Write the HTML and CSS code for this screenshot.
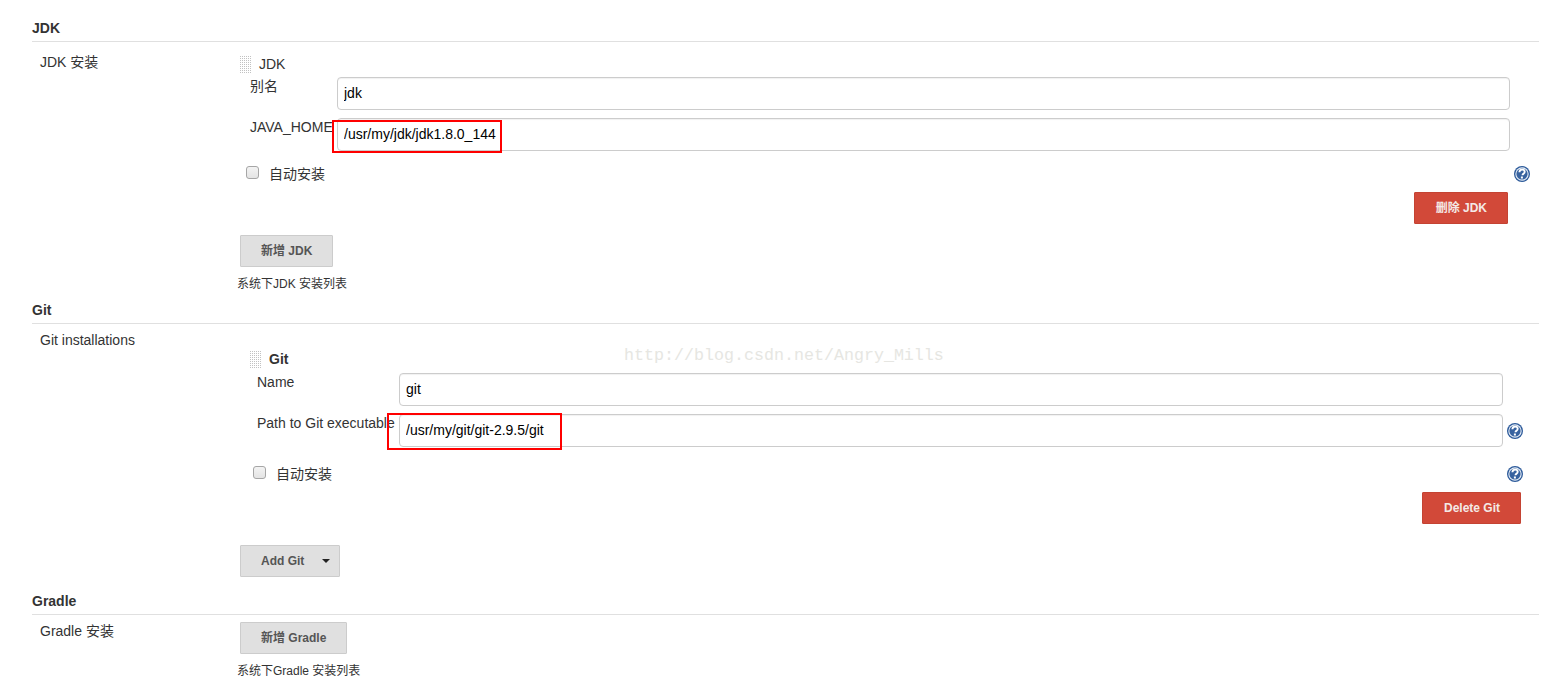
FILE: index.html
```html
<!DOCTYPE html>
<html lang="zh">
<head>
<meta charset="utf-8">
<title>Global Tool Configuration</title>
<link rel="stylesheet" href="styles.css">
</head>
<body>
<main class="page">
  <div class="watermark">http://blog.csdn.net/Angry_Mills</div>

  <section class="section section-jdk">
    <h2 class="section-title">JDK</h2>
    <div class="row row-jdk">
      <div class="row-label">JDK 安装</div>
      <div class="row-body">
        <div class="tool tool-jdk">
          <div class="tool-head"><span class="handle"></span><span class="tool-name">JDK</span></div>
          <div class="field">
            <label class="field-label">别名</label>
            <div class="input-wrap"><input class="text-input" type="text" value="jdk"></div>
          </div>
          <div class="field">
            <label class="field-label">JAVA_HOME</label>
            <div class="input-wrap"><input class="text-input" type="text" value="/usr/my/jdk/jdk1.8.0_144"><span class="mark mark-jdk"></span></div>
          </div>
          <div class="check-row">
            <input class="check" type="checkbox">
            <span class="check-text">自动安装</span>
            <svg class="help" viewBox="0 0 16 16"><use href="#help-icon"></use></svg>
          </div>
          <div class="tool-actions"><button class="btn btn-danger btn-cjk" type="button">删除 JDK</button></div>
        </div>
        <button class="btn btn-add btn-cjk" type="button">新增 JDK</button>
        <p class="hint">系统下JDK 安装列表</p>
      </div>
    </div>
  </section>

  <section class="section section-git">
    <h2 class="section-title">Git</h2>
    <div class="row row-git">
      <div class="row-label">Git installations</div>
      <div class="row-body">
        <div class="tool tool-git">
          <div class="tool-head"><span class="handle"></span><span class="tool-name tool-name-bold">Git</span></div>
          <div class="field">
            <label class="field-label">Name</label>
            <div class="input-wrap"><input class="text-input" type="text" value="git"></div>
            <span></span>
          </div>
          <div class="field">
            <label class="field-label">Path to Git executable</label>
            <div class="input-wrap"><input class="text-input" type="text" value="/usr/my/git/git-2.9.5/git"><span class="mark mark-git"></span></div>
            <svg class="help" viewBox="0 0 16 16"><use href="#help-icon"></use></svg>
          </div>
          <div class="check-row">
            <input class="check" type="checkbox">
            <span class="check-text">自动安装</span>
            <svg class="help" viewBox="0 0 16 16"><use href="#help-icon"></use></svg>
          </div>
          <div class="tool-actions"><button class="btn btn-danger" type="button">Delete Git</button></div>
        </div>
        <button class="btn btn-add btn-menu" type="button">Add Git<span class="caret"></span></button>
      </div>
    </div>
  </section>

  <section class="section section-gradle">
    <h2 class="section-title">Gradle</h2>
    <div class="row row-gradle">
      <div class="row-label">Gradle 安装</div>
      <div class="row-body">
        <button class="btn btn-add btn-cjk" type="button">新增 Gradle</button>
        <p class="hint">系统下Gradle 安装列表</p>
      </div>
    </div>
  </section>
</main>

<svg class="defs" aria-hidden="true">
  <symbol id="help-icon" viewBox="0 0 16 16">
    <circle cx="8" cy="8" r="8" fill="#2c5a9a"/>
    <circle cx="8" cy="8" r="6.7" fill="#e6edf6"/>
    <circle cx="8" cy="8" r="5.6" fill="#37629f"/>
    <path d="M5.4 6.2C5.5 4.5 6.6 3.6 8.1 3.6c1.6 0 2.6.9 2.6 2.2 0 1.1-.7 1.6-1.4 2.1-.6.4-.8.7-.8 1.4" fill="none" stroke="#fff" stroke-width="1.9"/>
    <rect x="6.9" y="10.5" width="2" height="2" fill="#fff"/>
  </symbol>
</svg>
</body>
</html>
```
FILE: styles.css
```css
* { box-sizing: border-box; }
html, body { margin: 0; padding: 0; background: #fff; }
body {
  font-family: "Liberation Sans", "Noto Sans CJK SC", sans-serif;
  font-size: 14px;
  color: #333;
  overflow: hidden;
}
.page {
  position: relative;
  width: 1548px;
  height: 690px;
  padding: 15px 9px 0 32px;
  overflow: hidden;
}
.defs { position: absolute; width: 0; height: 0; }
.watermark {
  position: absolute;
  left: 624px;
  top: 346px;
  font-family: "Liberation Mono", monospace;
  font-size: 16.67px;
  line-height: 20px;
  color: #e6e6e2;
  white-space: nowrap;
}
.section-git { margin-top: 5px; }
.section-gradle { margin-top: 11px; }
.section-title {
  margin: 0;
  height: 27px;
  line-height: 27px;
  font-size: 14px;
  font-weight: 700;
  color: #333;
  border-bottom: 1px solid #e0e0e0;
}
.row { display: grid; grid-template-columns: 208px 1fr; }
.row-label { padding-left: 8px; line-height: 20px; }
.row-jdk .row-label { padding-top: 10px; }
.row-git .row-label { padding-top: 6px; }
.row-gradle .row-label { padding-top: 6px; }
.row-body { display: flex; flex-direction: column; align-items: flex-start; }
.tool { width: 100%; }
.tool-jdk { padding-left: 0; margin-top: 14px; }
.tool-git { margin-top: 27px; }
.tool-head { display: flex; align-items: center; height: 17px; }
.tool-git .tool-head { padding-left: 10px; }
.handle {
  flex: none;
  width: 11px;
  height: 17px;
  margin-right: 8px;
  background-image:
    linear-gradient(#fff 1px, transparent 1px),
    linear-gradient(90deg, #fff 1px, transparent 1px);
  background-size: 2px 2px;
  background-position: 1px 1px;
  background-color: #c2c2c2;
}
.tool-name { line-height: 17px; }
.tool-name-bold { font-weight: 700; }
.field { display: grid; margin-bottom: 8px; }
.tool-jdk .field { grid-template-columns: 87px 1fr; padding: 0 29px 0 10px; }
.tool-git .field { grid-template-columns: 142px 1fr 20px; padding: 0 16px 0 17px; align-items: start; }
.tool-jdk .tool-head + .field { margin-top: 4px; }
.tool-git .tool-head + .field { margin-top: 5px; }
.field-label { display: block; line-height: 20px; margin-top: -1px; white-space: nowrap; }
.input-wrap { position: relative; }
.text-input {
  display: block;
  width: 100%;
  height: 33px;
  padding: 0 6px 2px;
  font-family: inherit;
  font-size: 14px;
  color: #000;
  background: #fff;
  border: 1px solid #ccc;
  border-radius: 4px;
  box-shadow: inset 0 1px 1px rgba(0,0,0,.06);
  outline: none;
}
.mark { position: absolute; border: 2px solid #f00; pointer-events: none; }
.mark-jdk { left: -5px; top: 2px; width: 170px; height: 33px; }
.mark-git { left: -12px; top: -1px; width: 175px; height: 37px; }
.help { display: block; width: 16px; height: 16px; flex: none; }
.tool-git .field .help { margin: 9px 0 0 4px; }
.check-row { display: flex; align-items: flex-start; height: 16px; }
.tool-jdk .check-row { margin-top: 15px; padding: 0 9px 0 6px; }
.tool-git .check-row { margin-top: 19px; padding: 0 16px 0 13px; }
.check {
  appearance: none;
  width: 13px;
  height: 13px;
  margin: 0;
  background: linear-gradient(#f3f3f3, #e4e4e4);
  border: 1px solid #a6a6a6;
  border-radius: 3px;
}
.check-text { margin-left: 10px; line-height: 16px; font-size: 14px; flex: 1; }
.tool-actions { display: flex; justify-content: flex-end; margin-top: 10px; }
.tool-jdk .tool-actions { padding-right: 31px; }
.tool-git .tool-actions { padding-right: 18px; }
.btn {
  display: inline-flex;
  align-items: center;
  justify-content: center;
  height: 32px;
  padding: 0 20px;
  font-family: inherit;
  font-size: 12px;
  font-weight: 700;
  border-radius: 1px;
  cursor: pointer;
}
.btn-danger { padding: 0 20px 0 21px; color: #f4e9e6; background: #d24939; border: 1px solid #c44333; }
.btn-add { color: #555; background: #e0e0e0; border: 1px solid #ccc; }
.btn-cjk { padding-bottom: 3px; }
.tool-jdk + .btn-add { margin-top: 11px; }
.tool-git + .btn-add { margin-top: 21px; }
.row-gradle .btn-add { margin-top: 7px; }
.btn-menu { padding: 0 9px 0 20px; }
.caret {
  flex: none;
  width: 0;
  height: 0;
  margin-left: 18px;
  border-left: 4px solid transparent;
  border-right: 4px solid transparent;
  border-top: 4px solid #222;
}
.hint { margin: 9px 0 0 -3px; font-size: 12px; line-height: 16px; }
```
